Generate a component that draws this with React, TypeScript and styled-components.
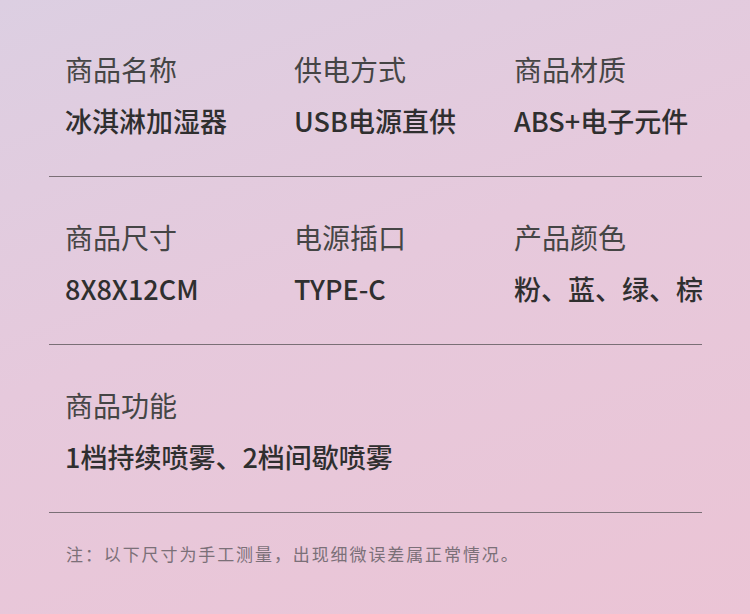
import React from "react";
import styled, { createGlobalStyle } from "styled-components";

const Global = createGlobalStyle`
  html, body { margin: 0; padding: 0; }
  body {
    width: 750px;
    height: 614px;
    overflow: hidden;
    font-family: "Noto Sans CJK SC", "Noto Sans", sans-serif;
  }
`;

const Page = styled.div`
  width: 750px;
  height: 614px;
  box-sizing: border-box;
  padding: 9px 48px 0 49px;
  background: linear-gradient(160deg, #dccfe2 0%, #e6c9dc 45%, #ebc4d5 100%);
`;

const Section = styled.section`
  display: grid;
  grid-template-columns: 229px 220px 1fr;
  padding: 46px 0 41px 16px;
  border-bottom: 1px solid #7a6f76;
`;

const Item = styled.div`
  display: flex;
  flex-direction: column;
  gap: 24px;
`;

const Label = styled.div`
  font-size: 28px;
  line-height: 28px;
  font-weight: 400;
  color: #454545;
  white-space: nowrap;
`;

const Value = styled.div`
  font-size: 27px;
  line-height: 28px;
  font-weight: 500;
  color: #2f2f2f;
  white-space: nowrap;
`;

const Note = styled.p`
  margin: 0;
  padding: 32px 0 0 17px;
  font-size: 17px;
  line-height: 18px;
  letter-spacing: 1.9px;
  color: #7b7078;
  white-space: nowrap;
`;

const rows: { label: string; value: string }[][] = [
  [
    { label: "商品名称", value: "冰淇淋加湿器" },
    { label: "供电方式", value: "USB电源直供" },
    { label: "商品材质", value: "ABS+电子元件" },
  ],
  [
    { label: "商品尺寸", value: "8X8X12CM" },
    { label: "电源插口", value: "TYPE-C" },
    { label: "产品颜色", value: "粉、蓝、绿、棕" },
  ],
  [{ label: "商品功能", value: "1档持续喷雾、2档间歇喷雾" }],
];

export default function App() {
  return (
    <>
      <Global />
      <Page>
        {rows.map((row, i) => (
          <Section key={i}>
            {row.map((c) => (
              <Item key={c.label}>
                <Label>{c.label}</Label>
                <Value>{c.value}</Value>
              </Item>
            ))}
          </Section>
        ))}
        <Note>注：以下尺寸为手工测量，出现细微误差属正常情况。</Note>
      </Page>
    </>
  );
}
